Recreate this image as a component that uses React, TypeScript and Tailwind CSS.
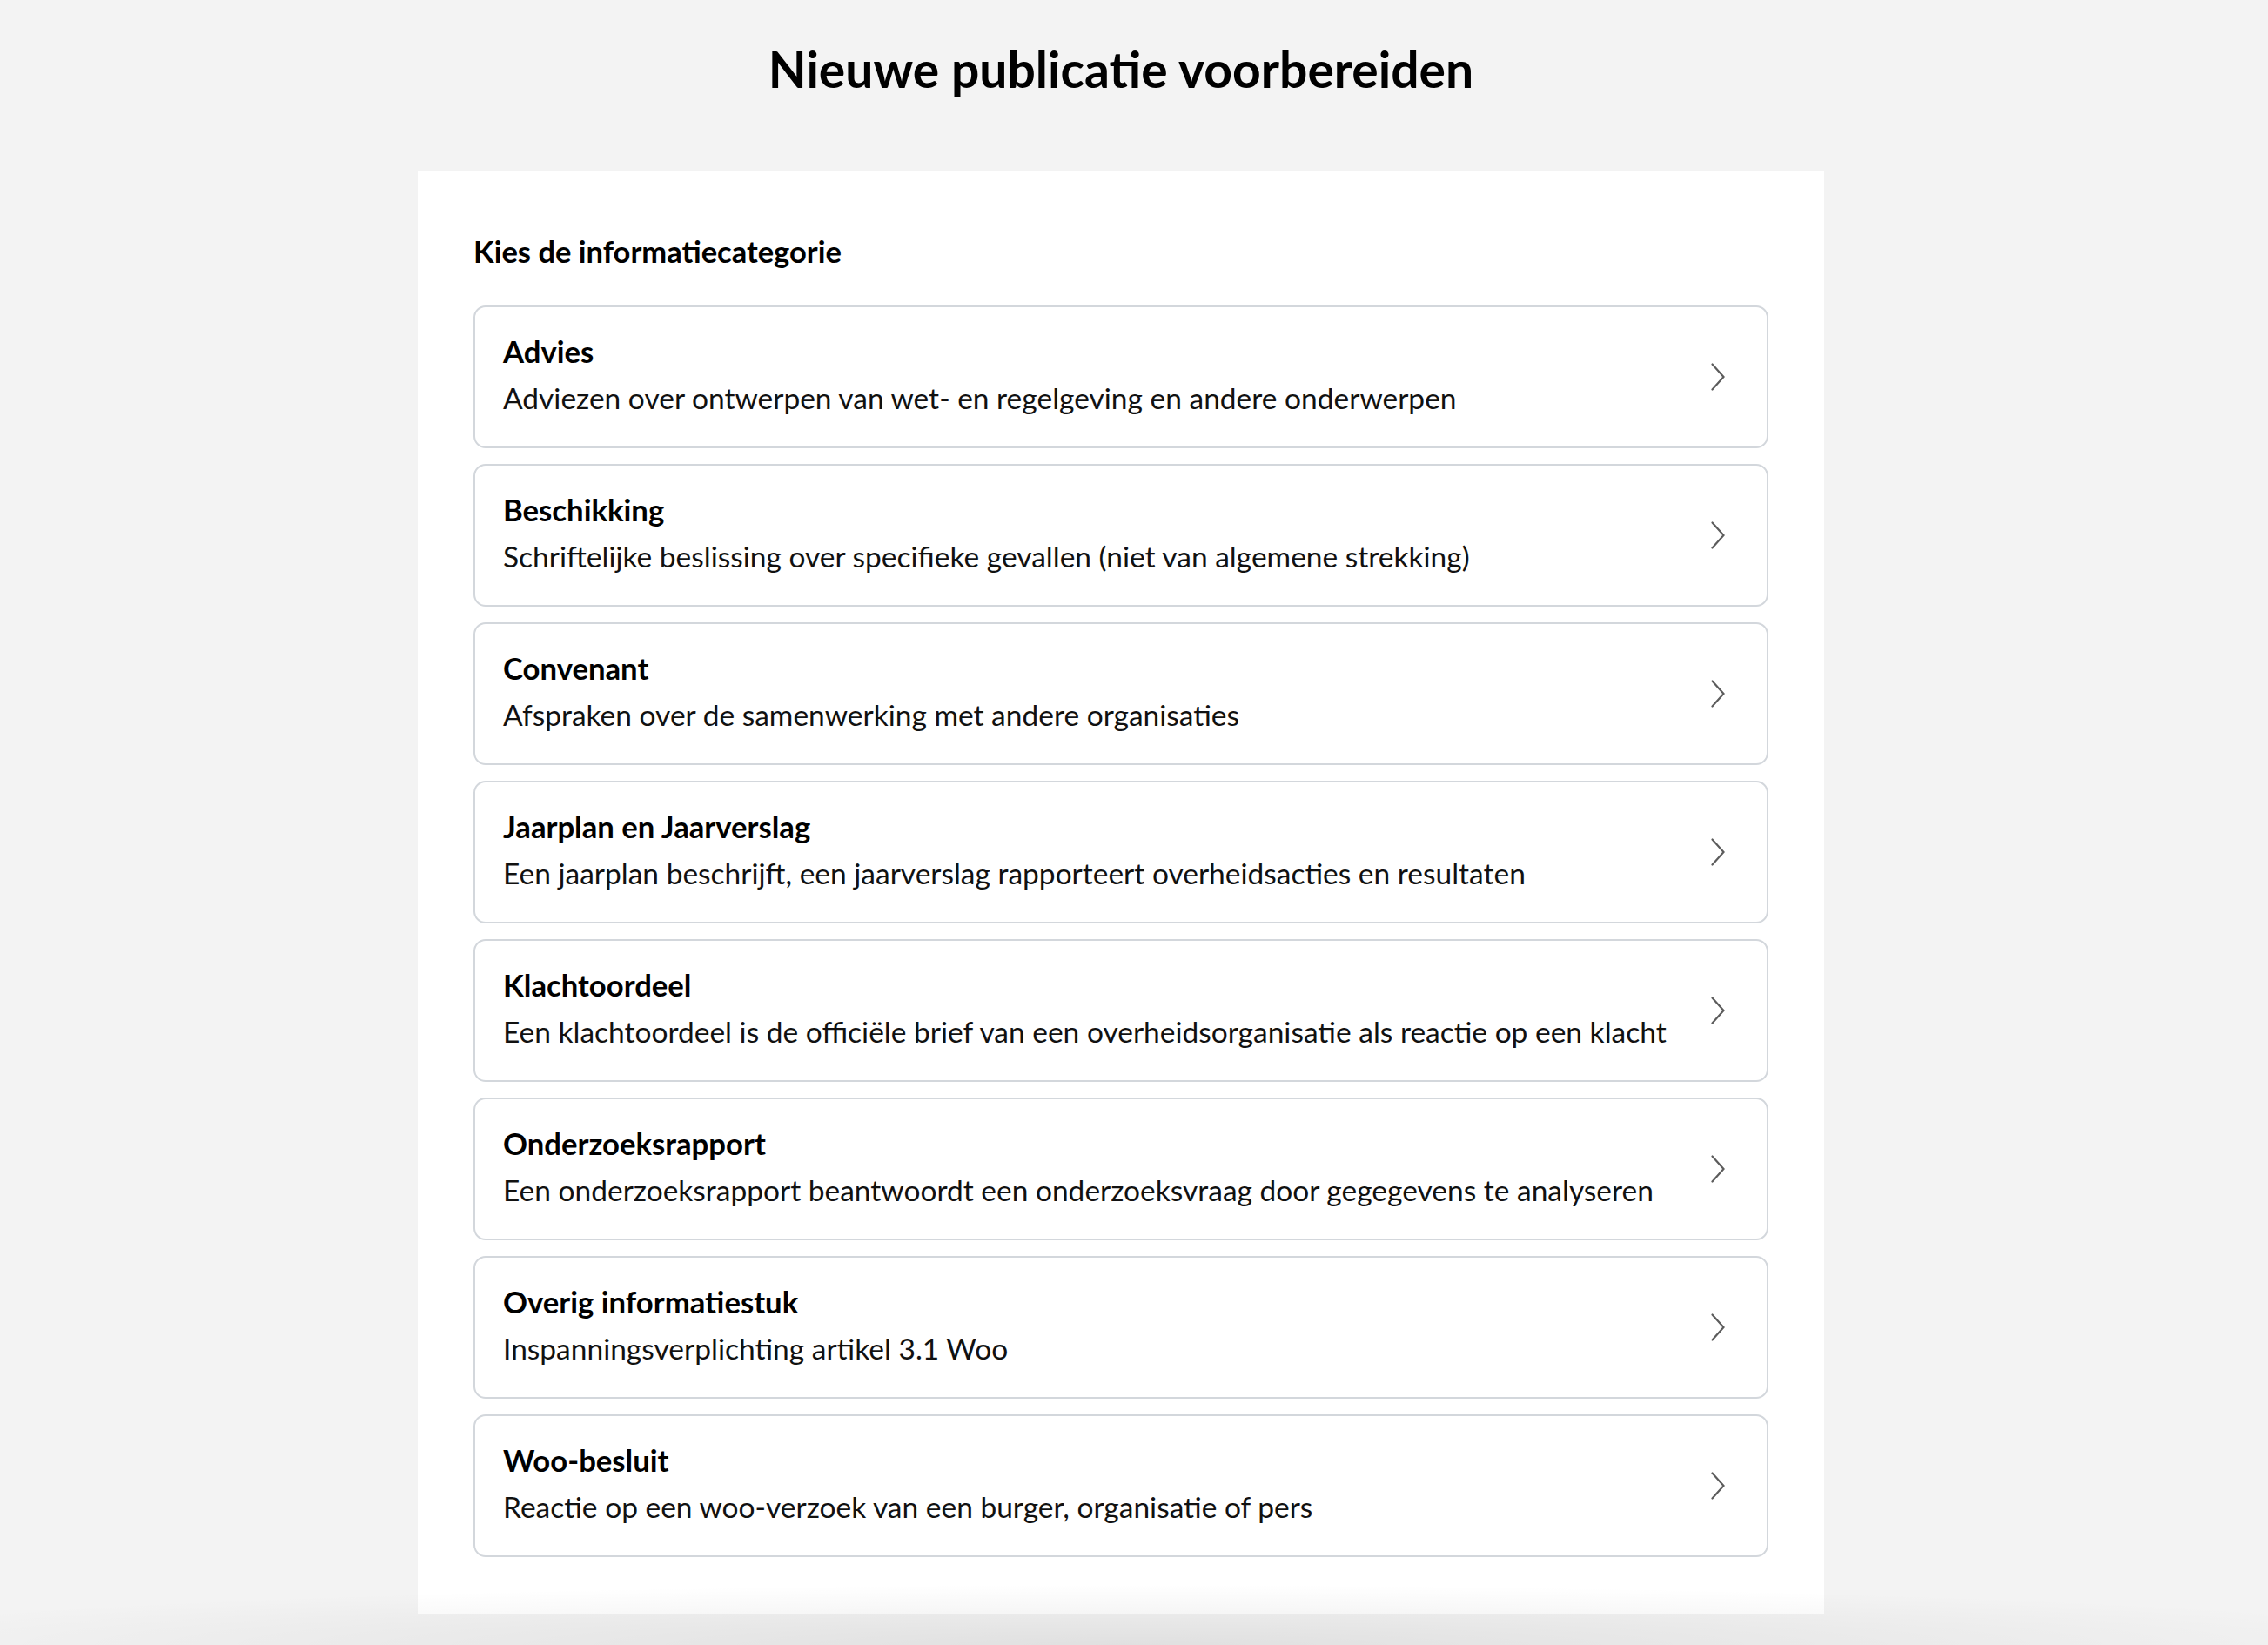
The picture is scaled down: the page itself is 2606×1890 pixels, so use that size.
import React from "react";

const items = [
  { t: "Advies", d: "Adviezen over ontwerpen van wet- en regelgeving en andere onderwerpen" },
  { t: "Beschikking", d: "Schriftelijke beslissing over specifieke gevallen (niet van algemene strekking)" },
  { t: "Convenant", d: "Afspraken over de samenwerking met andere organisaties" },
  { t: "Jaarplan en Jaarverslag", d: "Een jaarplan beschrijft, een jaarverslag rapporteert overheidsacties en resultaten" },
  { t: "Klachtoordeel", d: "Een klachtoordeel is de officiële brief van een overheidsorganisatie als reactie op een klacht" },
  { t: "Onderzoeksrapport", d: "Een onderzoeksrapport beantwoordt een onderzoeksvraag door gegegevens te analyseren" },
  { t: "Overig informatiestuk", d: "Inspanningsverplichting artikel 3.1 Woo" },
  { t: "Woo-besluit", d: "Reactie op een woo-verzoek van een burger, organisatie of pers" },
];

function Chevron() {
  return (
    <svg width="16" height="32" viewBox="0 0 16 32" fill="none" className="mt-[4px] shrink-0">
      <polyline points="1.5,1.5 14.5,16 1.5,30.5" stroke="#5c5c5c" strokeWidth="2.2" strokeLinecap="round" strokeLinejoin="miter" />
    </svg>
  );
}

export default function App() {
  return (
    <div className="relative min-h-[1890px] overflow-hidden bg-[#f3f3f3] text-black font-['Lato',_'Liberation_Sans',_sans-serif]">
      <div className="w-[2576px]">
        <h1 className="pt-[47px] text-center text-[57px] leading-[65px] font-bold">Nieuwe publicatie voorbereiden</h1>
        <div className="mx-auto mt-[85px] w-[1616px] bg-white px-[64px] pt-[68px] pb-[65px]">
          <h2 className="text-[34.5px] leading-[48px] font-bold">Kies de informatiecategorie</h2>
          <ul className="mt-[38px] flex flex-col gap-[18px]">
            {items.map((it) => (
              <li key={it.t}>
                <button className="flex w-full items-center justify-between rounded-[14px] border-2 border-[#d3d7dc] bg-white pt-[27px] pb-[32px] pl-[32px] pr-[48px] text-left">
                  <span className="flex flex-col">
                    <span className="text-[34.7px] leading-[48px] font-bold text-black">{it.t}</span>
                    <span className="mt-[5px] text-[33.5px] leading-[48px] text-[#111]">{it.d}</span>
                  </span>
                  <Chevron />
                </button>
              </li>
            ))}
          </ul>
        </div>
      </div>
      <div className="pointer-events-none absolute bottom-0 left-0 h-[70px] w-full bg-[radial-gradient(ellipse_60%_100%_at_50%_100%,rgba(0,0,0,0.08),rgba(0,0,0,0)_100%)]" />
    </div>
  );
}
